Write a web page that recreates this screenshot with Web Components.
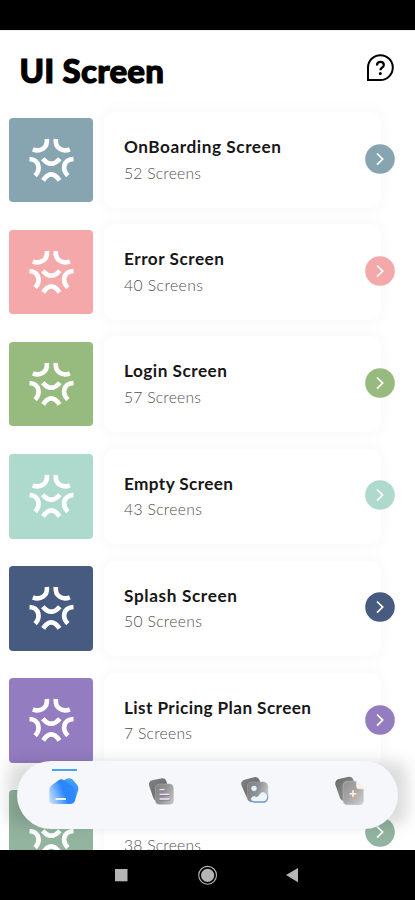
<!DOCTYPE html>
<html lang="en">
<head>
<meta charset="utf-8">
<meta name="viewport" content="width=device-width">
<title>UI Screen</title>
<style>html,body{margin:0;height:900px;overflow:hidden;background:#fff;font-family:Lato,"Open Sans",sans-serif}</style>
</head>
<body>
<app-shell>
  <app-header slot="header">UI Screen</app-header>
  <screen-row color="#87a5b1" tw="157" sw="77"><span>OnBoarding Screen</span><span slot="count">52 Screens</span></screen-row>
  <screen-row color="#f4a8a9" tw="100" sw="79"><span>Error Screen</span><span slot="count">40 Screens</span></screen-row>
  <screen-row color="#97bb7e" tw="103" sw="77"><span>Login Screen</span><span slot="count">57 Screens</span></screen-row>
  <screen-row color="#aedacd" tw="109" sw="78"><span>Empty Screen</span><span slot="count">43 Screens</span></screen-row>
  <screen-row color="#475a80" tw="113" sw="78"><span>Splash Screen</span><span slot="count">50 Screens</span></screen-row>
  <screen-row color="#937cc0" tw="187" sw="68"><span>List Pricing Plan Screen</span><span slot="count">7 Screens</span></screen-row>
  <screen-row color="#93b5a0" tw="0" sw="77"><span></span><span slot="count">38 Screens</span></screen-row>
  <tab-bar slot="tabs"></tab-bar>
  <system-bar slot="system"></system-bar>
</app-shell>
<script>
const root = (el, html) => { const s = el.attachShadow({mode:'open'}); s.innerHTML = html; return s; };

// Text that spaces its letters to fill a given width
customElements.define('fit-text', class extends HTMLElement {
  constructor(){ super(); root(this, `<style>:host{display:block;white-space:nowrap}span{display:inline-block}</style><span><slot></slot></span>`); }
  connectedCallback(){
    const want = +this.getAttribute('w'); if(!want) return;
    const fit = () => {
      const s = this.shadowRoot.querySelector('span');
      s.style.letterSpacing = '0px';
      const text = this.getAttribute('n');
      s.style.letterSpacing = ((want - s.getBoundingClientRect().width) / (text - 1)) + 'px';
    };
    requestAnimationFrame(fit); fit();
  }
});

customElements.define('app-shell', class extends HTMLElement {
  constructor(){ super(); root(this, `<style>
    :host{display:flex;flex-direction:column;width:415px;height:900px;background:#fff}
    .status{height:30px;background:#000;flex:none}
    main{height:820px;flex:none;overflow:hidden;position:relative;box-shadow:inset 0 1px #eee}
    .list{display:flex;flex-direction:column}
    .tabs{position:absolute;left:17px;top:731px;z-index:1}
  </style><div class="status"></div><main><slot name="header"></slot><div class="list"><slot></slot></div><div class="tabs"><slot name="tabs"></slot></div></main><slot name="system"></slot>`); }
});

customElements.define('app-header', class extends HTMLElement {
  constructor(){ super(); root(this, `<style>
    :host{display:flex;justify-content:space-between;align-items:flex-start;box-sizing:border-box;height:73px;padding:20px 20px 0 19.5px}
    fit-text{font-weight:900;font-size:33px;line-height:40px;color:#000;-webkit-text-stroke:1.1px #000}
    svg{width:30px;height:30px;margin-top:3px}
  </style><fit-text w="144.5" n="9"><slot></slot></fit-text>
  <svg viewBox="0 0 30 30" fill="none" stroke="#000" stroke-width="2"><path d="M3 27V14.6a12.4 12.4 0 1 1 12.4 12.4Z"/><path stroke-width="2.2" d="M12 12.400q0-3.500 3.400-3.500t3.400 3q0 1.700-1.900 2.800-1.500.9-1.500 2.500"/><circle cx="15.300" cy="20.600" r="1.500" fill="#000" stroke="none"/></svg>`); }
});

customElements.define('screen-row', class extends HTMLElement {
  constructor(){
    super();
    const c = this.getAttribute('color');
    const n = [...this.querySelectorAll('span')].map(s => s.textContent.length);
    root(this, `<style>
    :host{display:flex;align-items:center;gap:11px;box-sizing:border-box;height:112.1px;padding:2px 34px 0 8.5px}
    .tile{width:84.5px;height:84.5px;flex:none;border-radius:4px;background:${c};display:block}
    .card{position:relative;flex:1;height:95.5px;box-sizing:border-box;padding:23px 20px 0;border-radius:12px;background:#fff;box-shadow:0 0 16px 2px rgba(0,0,0,.032)}
    .t{font-weight:700;font-size:17.2px;line-height:24px;color:#171717}
    .s{font-weight:300;font-size:15.7px;line-height:22px;margin-top:2.3px;color:#505050}
    .go{position:absolute;right:-14px;top:31.800px;width:30px;height:30px}
  </style>
  <svg class="tile" viewBox="-19.5 -21 253.5 253.5" fill="none" stroke="#fff" stroke-width="14"><path d="M94 42C97 69 75 82 52 73M121 42C118 69 140 82 163 73M82 101Q107 131 133 101M42 102C72 104 76 134 59 152M174 102C142 104 139 134 157 152M83 166Q107 130 132 166"/></svg>
  <div class="card"><fit-text class="t" w="${this.getAttribute('tw')}" n="${n[0]}"><slot></slot></fit-text><fit-text class="s" w="${this.getAttribute('sw')}" n="${n[1]}"><slot name="count"></slot></fit-text>
  <svg class="go" viewBox="0 0 30 30"><circle cx="15" cy="15" r="14.8" fill="${c}"/><path d="M12 9.500l5.700 5.600-5.700 5.600" fill="none" stroke="#fff" stroke-width="1.700"/></svg></div>`); }
});

customElements.define('tab-bar', class extends HTMLElement {
  constructor(){ super(); root(this, `<style>
    :host{display:block;width:381px;height:68px;position:relative}
    .shade{position:absolute;inset:1px -9px 4px;border-radius:10px;background:rgba(0,0,0,.14);filter:blur(8px)}
    .bar{position:relative;display:grid;grid-template-columns:repeat(4,1fr);height:68px;border-radius:34px;background:#f5f7fa}
    .tab{display:flex;justify-content:center;padding-top:10px;position:relative}
    svg{width:40px;height:40px}
    .on::before{content:"";position:absolute;top:7.5px;left:35px;width:25px;height:2px;background:#44a6f2}
  </style>
  <div class="shade"></div><div class="bar">
  <div class="tab on"><svg viewBox="134 63 120 120"><defs>
    <linearGradient id="a" x1="0" x2="1" y1=".7" y2=".3"><stop offset="0" stop-color="#b9d7ff"/><stop offset=".2" stop-color="#8cbdff"/><stop offset=".55" stop-color="#2b86ff"/><stop offset="1" stop-color="#2f8aff"/></linearGradient>
    <linearGradient id="b" x1="0" x2="0" y1="0" y2="1"><stop offset="0" stop-color="#41a3f8"/><stop offset="1" stop-color="#3588fb"/></linearGradient></defs>
    <path fill="url(#b)" d="M196 88q11-7 20 0l15 18q5 6 3 13l-9 29q-3 10-13 10l-32-5-2-55z"/>
    <path fill="url(#a)" d="M175 91q8-6 16 0l26 17q7 5 7 14v26q0 13-13 14h-51q-13 0-13-13v-29q0-9 7-14z"/>
    <rect x="165" y="144" width="32" height="6" rx="2" fill="#eaf3ff"/></svg></div>
  <div class="tab"><svg viewBox="30 63 120 120"><defs>
    <linearGradient id="c" x1="0" x2="1" y1="0" y2="1"><stop offset="0" stop-color="#838383"/><stop offset=".45" stop-color="#707070"/><stop offset="1" stop-color="#999"/></linearGradient>
    <linearGradient id="d" x1="0" x2="1" y1=".2" y2=".7"><stop offset="0" stop-color="#858585"/><stop offset=".5" stop-color="#949494"/><stop offset="1" stop-color="#bdbdbd"/></linearGradient></defs>
    <path fill="url(#c)" d="M66 91l31-6q9-1 12 8l16 50q1 9-8 10H82q-9 0-12-9L57 106q-2-11 9-15z"/>
    <rect x="76" y="102" width="54" height="61" rx="12" fill="url(#d)" stroke="#b1b1b1" stroke-width="1.5"/>
    <path d="M90 121h12M90 135h27M90 149h27" stroke="#886ba5" stroke-width="5" stroke-linecap="round"/><path d="M90 119h12M90 133h27M90 147h27" stroke="#f1eaf5" stroke-width="4" stroke-linecap="round"/></svg></div>
  <div class="tab"><svg viewBox="315 63 120 120"><defs>
    <linearGradient id="e" x1="0" x2="1" y1="0" y2="1"><stop offset="0" stop-color="#838383"/><stop offset=".45" stop-color="#707070"/><stop offset="1" stop-color="#999"/></linearGradient>
    <linearGradient id="f" x1="0" x2="1" y1=".3" y2=".6"><stop offset="0" stop-color="#828282"/><stop offset=".5" stop-color="#919191"/><stop offset="1" stop-color="#c5c5c5"/></linearGradient></defs>
    <path fill="url(#e)" d="M343 89l32-8q9-1 13 8l18 53-8 11h-33q-10 0-14-9l-17-39q-3-11 9-16z"/>
    <rect x="352" y="96" width="61" height="60" rx="13" fill="url(#f)" stroke="#aaa" stroke-width="1.5"/>
    <path fill="#699bd0" d="M361 150q7-14 16-7 4 3 9-3 10-18 20-11 8 4 9 12-1 14-11 17h-31q-9-2-12-8z"/>
    <path fill="#eef5fc" d="M362 147q7-13 15-7 5 3 10-4 9-15 18-8 7 4 7 12-2 12-11 14h-29q-8-1-10-7z"/>
    <circle cx="374" cy="117" r="9" fill="#699bd0"/><circle cx="372" cy="115" r="8" fill="#e9f1f9"/></svg></div>
  <div class="tab"><svg viewBox="166 63 120 120"><defs>
    <linearGradient id="g" x1="0" x2="1" y1="0" y2="1"><stop offset="0" stop-color="#686868"/><stop offset=".45" stop-color="#828282"/><stop offset="1" stop-color="#777"/></linearGradient>
    <linearGradient id="h" x1="0" x2="1" y1="0" y2="1"><stop offset="0" stop-color="#929292"/><stop offset=".5" stop-color="#a7a7a7"/><stop offset="1" stop-color="#d0d0d0"/></linearGradient></defs>
    <path fill="url(#g)" d="M190 88l32-8q9-1 13 7l20 54-8 12h-38q-9 0-13-9l-14-40q-2-11 8-16z"/>
    <path fill="url(#h)" stroke="#c4c4c4" stroke-width="1.5" d="M217 94h27l22 24v34q0 11-12 12h-37q-11-1-12-12v-46q1-11 12-12z"/>
    <path fill="#efc6a2" d="M247 97l20 22-15-1q-7-1-7-8z"/><path fill="#fff2e8" d="M245 94l21 22h-15q-6-1-6-7z"/>
    <path d="M226 133h21M236.500 123v21" stroke="#d9a77e" stroke-width="5"/><path d="M225 131h20M235 121v20" stroke="#fff3ea" stroke-width="4.500"/></svg></div></div>`); }
});

customElements.define('system-bar', class extends HTMLElement {
  constructor(){ super(); root(this, `<style>
    :host{display:flex;height:50px;flex:none;box-sizing:border-box;padding:15px 114px 0 111px;justify-content:space-between;background:#000}
    svg{width:20px;height:20px;overflow:visible;fill:#b5b5b5}
  </style><svg viewBox="0 0 20 20"><path d="M4 4h12.500v12.300H4z"/></svg>
  <svg viewBox="0 0 20 20"><circle cx="11.600" cy="10.300" r="6.600"/><circle cx="11.600" cy="10.300" r="8.900" fill="none" stroke="#b5b5b5" stroke-width="1.100"/></svg>
  <svg viewBox="0 0 20 20"><path d="M5 10.100L17 3v14.200z"/></svg>`); }
});
</script>
</body>
</html>
